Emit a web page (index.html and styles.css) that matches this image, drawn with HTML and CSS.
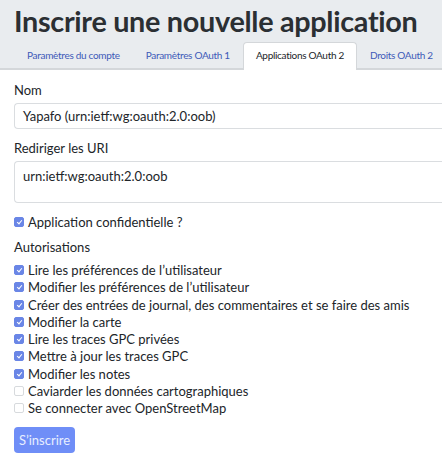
FILE: index.html
```html
<!DOCTYPE html>
<html lang="fr">
<head>
<meta charset="utf-8">
<link rel="stylesheet" href="styles.css">
</head>
<body>
<header class="head">
  <h1 class="title">Inscrire une nouvelle application</h1>
  <nav class="tabs">
    <a class="tab">Paramètres du compte</a>
    <a class="tab">Paramètres OAuth 1</a>
    <a class="tab active">Applications OAuth 2</a>
    <a class="tab">Droits OAuth 2</a>
  </nav>
</header>
<form class="form">
  <label class="label">Nom</label>
  <div class="input">Yapafo (urn:ietf:wg:oauth:2.0:oob)</div>
  <label class="label">Rediriger les URI</label>
  <div class="input area">urn:ietf:wg:oauth:2.0:oob</div>
  <div class="check conf"><span class="box on"></span>Application confidentielle ?</div>
  <div class="label">Autorisations</div>
  <div class="list">
    <div class="check"><span class="box on"></span>Lire les préférences de l’utilisateur</div>
    <div class="check"><span class="box on"></span>Modifier les préférences de l’utilisateur</div>
    <div class="check"><span class="box on"></span>Créer des entrées de journal, des commentaires et se faire des amis</div>
    <div class="check"><span class="box on"></span>Modifier la carte</div>
    <div class="check"><span class="box on"></span>Lire les traces GPC privées</div>
    <div class="check"><span class="box on"></span>Mettre à jour les traces GPC</div>
    <div class="check"><span class="box on"></span>Modifier les notes</div>
    <div class="check"><span class="box"></span>Caviarder les données cartographiques</div>
    <div class="check"><span class="box"></span>Se connecter avec OpenStreetMap</div>
  </div>
  <button type="button" class="btn">S’inscrire</button>
</form>
</body>
</html>
```
FILE: styles.css
```css
html, body { margin: 0; padding: 0; background: #fff; }
body { font-family: Lato, "Noto Sans", sans-serif; color: #212529; overflow: hidden; width: 442px; }
.head { background: #e9ecef; border-bottom: 2px solid #d4d7da; padding: 0 0 0 14px; }
.title { margin: 0; padding-top: 2px; font-size: 28.8px; font-weight: 700; letter-spacing: -0.3px; line-height: 38px; color: #2b2f33; white-space: nowrap; }
.tabs { display: flex; margin-top: 2px; }
.tab { font-size: 10px; letter-spacing: -0.3px; color: #3d5ab8; padding: 0 12px; height: 26px; line-height: 25px; white-space: nowrap; border: 1px solid transparent; border-bottom: 0; border-radius: 4px 4px 0 0; box-sizing: border-box; }
.tab.active { background: #fff; color: #212529; border-color: #d4d7da; margin-bottom: -2px; height: 28px; }
.form { padding: 11px 0 0 14px; font-size: 13px; }
.label { display: block; height: 18px; line-height: 18px; margin-bottom: 4px; }
.input { box-sizing: border-box; width: 100%; height: 26px; border: 1px solid #dadde0; border-right: 0; border-radius: 4px 0 0 4px; padding: 0 8px; line-height: 24px; margin-bottom: 10px; font-size: 13px; }
.input.area { height: 42px; padding-top: 2px; margin-bottom: 10px; }
.check { display: flex; align-items: center; height: 17.3px; white-space: nowrap; }
.conf { margin-bottom: 8px; }
.box { box-sizing: border-box; width: 10px; height: 10px; border: 1px solid #d7dadd; border-radius: 2px; margin-right: 4px; background: #fff; flex: none; }
.box.on { background: #6a86e6; border-color: #6a86e6; position: relative; }
.box.on::after { content: ""; position: absolute; left: 2.5px; top: 1px; width: 2px; height: 4px; border: solid #fff; border-width: 0 1px 1px 0; transform: rotate(40deg); }
.list { margin-top: 5px; }
.btn { display: block; margin-top: 10px; font-family: inherit; font-size: 13px; color: #e8eeff; background: #6f8ef7; border: 0; border-radius: 4px; height: 26px; width: 61px; padding: 0; }
```
